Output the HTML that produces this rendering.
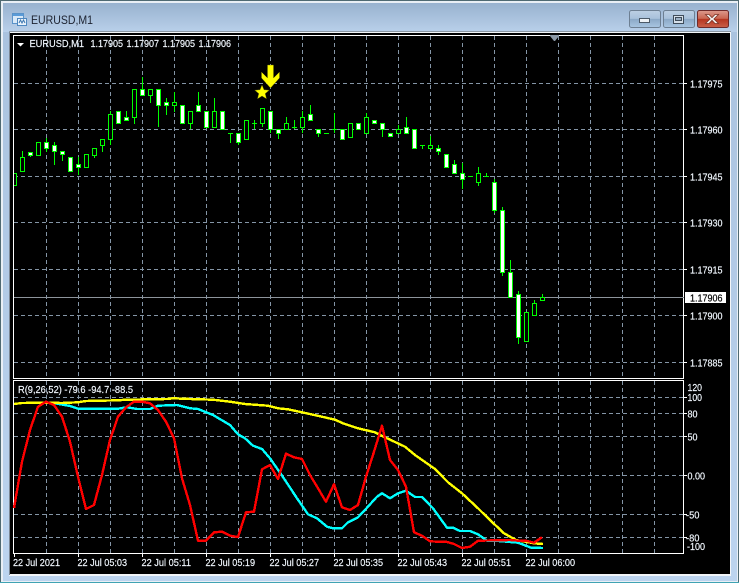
<!DOCTYPE html>
<html><head><meta charset="utf-8"><title>EURUSD,M1</title>
<style>
html,body{margin:0;padding:0;background:#fff;width:741px;height:584px;overflow:hidden}
svg{display:block;position:absolute;left:0;top:0}
text{font-family:"Liberation Sans",sans-serif;font-size:10.5px;fill:#f2f8ff;stroke:#f2f8ff;stroke-width:.18}
</style></head><body>
<svg width="741" height="584" viewBox="0 0 741 584" xmlns="http://www.w3.org/2000/svg">
<defs>
<linearGradient id="t" x1="0" y1="0" x2="0" y2="1"><stop offset="0" stop-color="#98b2cf"/><stop offset="1" stop-color="#b9d0ea"/></linearGradient>
<linearGradient id="side" x1="0" y1="0" x2="0" y2="1"><stop offset="0" stop-color="#a9c2de"/><stop offset="1" stop-color="#bcd4ef"/></linearGradient>
<linearGradient id="b" x1="0" y1="0" x2="0" y2="1"><stop offset="0" stop-color="#bccfe3"/><stop offset=".48" stop-color="#a8c1db"/><stop offset=".5" stop-color="#8ba8c6"/><stop offset="1" stop-color="#a9c6e2"/></linearGradient>
<linearGradient id="c" x1="0" y1="0" x2="0" y2="1"><stop offset="0" stop-color="#dc9a8e"/><stop offset=".48" stop-color="#c9644f"/><stop offset=".5" stop-color="#b5341f"/><stop offset="1" stop-color="#c9604a"/></linearGradient>
<clipPath id="m"><rect x="14" y="36" width="669" height="342"/></clipPath>
</defs>
<!-- window -->
<rect width="741" height="584" fill="#fff"/>
<rect x="0" y="0" width="739" height="583" fill="#4f6a72"/>
<rect x="1" y="1" width="737" height="581" fill="#e9eff5"/>
<rect x="3" y="3" width="734" height="578" fill="url(#side)"/>
<rect x="3" y="3" width="734" height="29" fill="url(#t)"/>
<rect x="0" y="582" width="739" height="1" fill="#3fa3b3"/>
<rect x="9" y="31" width="722" height="1" fill="#8b97a3"/>
<rect x="9" y="32" width="722" height="544" fill="#f2f5f8"/>
<rect x="9" y="32" width="1" height="543" fill="#7b8794"/>
<rect x="10" y="33" width="720" height="541" fill="#000"/>
<!-- title icon -->
<g shape-rendering="crispEdges">
<rect x="12.5" y="13.5" width="11" height="10" fill="#d9e9f8" stroke="#5a93c9"/>
<rect x="13" y="14" width="10" height="2" fill="#5a9bd8"/>
<rect x="17.5" y="18.5" width="9" height="7" fill="#eaf3fb" stroke="#4f88c0"/>
</g>
<path d="M19 23l1.5-3 1.5 3 1.5-3 1.5 3" fill="none" stroke="#3f78b0"/>
<text x="31" y="24" textLength="62" lengthAdjust="spacingAndGlyphs" style="font-size:12px;fill:#1c2230;stroke:none">EURUSD,M1</text>
<!-- buttons -->
<rect x="629.5" y="10.5" width="31" height="17" rx="2" fill="url(#b)" stroke="#6d7f92"/>
<rect x="663.5" y="10.5" width="31" height="17" rx="2" fill="url(#b)" stroke="#6d7f92"/>
<rect x="697.5" y="10.5" width="31" height="17" rx="2" fill="url(#c)" stroke="#6e2a2a"/>
<g shape-rendering="crispEdges">
<rect x="639.5" y="18.5" width="10" height="4" fill="#eef2f6" stroke="#4c5a68"/>
<rect x="673.5" y="15.5" width="10" height="8" fill="#d5dfe9" stroke="#3f4c5a"/>
<rect x="675.5" y="17.5" width="6" height="3" fill="#9db2c7" stroke="#3f4c5a" stroke-width="1"/>
</g>
<path d="M709 14.5l3 3.2 3-3.2h3.5l-4.6 4.5 4.6 4.5H715l-3-3.2-3 3.2h-3.5l4.6-4.5-4.6-4.5z" fill="#f4f4f4" stroke="#7a3326" stroke-width=".8"/>
<!-- frames -->
<g shape-rendering="crispEdges" fill="none">
<rect x="13.5" y="35.5" width="670" height="343" stroke="#fff"/>
<rect x="13.5" y="380.5" width="670" height="173" stroke="#fff"/>
<!-- grid main -->
<g stroke="#8495a6" stroke-dasharray="4 3">
<path d="M46.5 36V378M78.5 36V378M110.5 36V378M142.5 36V378M174.5 36V378M206.5 36V378M238.5 36V378M270.5 36V378M302.5 36V378M334.5 36V378M366.5 36V378M398.5 36V378M430.5 36V378M462.5 36V378M494.5 36V378M526.5 36V378M558.5 36V378M590.5 36V378M622.5 36V378M654.5 36V378"/>
<path d="M14 83.5H683M14 129.5H683M14 176.5H683M14 222.5H683M14 269.5H683M14 315.5H683M14 362.5H683"/>
<path d="M46.5 381V553M78.5 381V553M110.5 381V553M142.5 381V553M174.5 381V553M206.5 381V553M238.5 381V553M270.5 381V553M302.5 381V553M334.5 381V553M366.5 381V553M398.5 381V553M430.5 381V553M462.5 381V553M494.5 381V553M526.5 381V553M558.5 381V553M590.5 381V553M622.5 381V553M654.5 381V553"/>
<path d="M14 397.5H683M14 413.5H683M14 436.5H683M14 475.5H683M14 514.5H683M14 537.5H683"/>
</g>
<path d="M14 297.5H684" stroke="#8d949b"/>
<!-- ticks -->
<path d="M684 83.5h3M684 129.5h3M684 176.5h3M684 222.5h3M684 269.5h3M684 315.5h3M684 362.5h3M684 397.5h3M684 413.5h3M684 436.5h3M684 475.5h3M684 514.5h3M684 537.5h3M14.5 554v3M78.5 554v3M142.5 554v3M206.5 554v3M270.5 554v3M334.5 554v3M398.5 554v3M462.5 554v3M526.5 554v3" stroke="#fff"/>
</g>
<!-- candles -->
<g clip-path="url(#m)" shape-rendering="crispEdges">
<path fill="none" stroke="#00ff00" d="M22.5 151V171M30.5 152V157M46.5 138V152M54.5 142V165M62.5 151V161M78.5 157V175M94.5 148V158M102.5 139V152M110.5 111V145M126.5 111V120M134.5 89V124M142.5 77V95M150.5 89V103M158.5 89V127M166.5 98V115M174.5 92V112M190.5 111V129M198.5 92V111M214.5 98V127M230.5 133V143M238.5 133V145M254.5 120V129M262.5 108V127M270.5 111V133M278.5 129V139M286.5 117V129M294.5 120V129M302.5 111V133M310.5 105V120M318.5 129V137M334.5 113V133M366.5 113V133M382.5 123V137M398.5 125V133M406.5 117V133M422.5 145V149M430.5 136V148M438.5 145V155M454.5 160V173M462.5 163V189M478.5 167V186M486.5 173V176M494.5 179V213M502.5 207V276M510.5 260V272M518.5 291V344M534.5 300V315M542.5 294V300
M228 133.5h5M252 123.5h5M292 127.5h5M324 133.5h5M332 129.5h5M420 145.5h5M468 176.5h5M484 176.5h5"/>
<path fill="#000" stroke="#00ff00" d="M12.5 173.5h4V185.5h-4zM20.5 157.5h4V171.5h-4zM36.5 142.5h4V155.5h-4zM84.5 154.5h4V167.5h-4zM92.5 148.5h4V155.5h-4zM100.5 139.5h4V145.5h-4zM108.5 114.5h4V139.5h-4zM132.5 89.5h4V117.5h-4zM148.5 89.5h4V95.5h-4zM172.5 102.5h4V105.5h-4zM188.5 111.5h4V123.5h-4zM212.5 111.5h4V127.5h-4zM244.5 120.5h4V139.5h-4zM260.5 108.5h4V123.5h-4zM284.5 123.5h4V129.5h-4zM300.5 117.5h4V127.5h-4zM348.5 123.5h4V137.5h-4zM364.5 117.5h4V133.5h-4zM396.5 129.5h4V133.5h-4zM428.5 145.5h4V148.5h-4zM476.5 173.5h4V182.5h-4zM524.5 312.5h4V341.5h-4zM532.5 303.5h4V315.5h-4zM540.5 297.5h4V300.5h-4z"/>
<path fill="#fff" stroke="#00ff00" d="M28.5 152.5h4V155.5h-4zM44.5 142.5h4V148.5h-4zM52.5 145.5h4V151.5h-4zM60.5 151.5h4V154.5h-4zM68.5 157.5h4V171.5h-4zM76.5 164.5h4V167.5h-4zM116.5 111.5h4V123.5h-4zM124.5 117.5h4V120.5h-4zM140.5 89.5h4V95.5h-4zM156.5 89.5h4V105.5h-4zM164.5 102.5h4V105.5h-4zM180.5 105.5h4V123.5h-4zM196.5 105.5h4V111.5h-4zM204.5 111.5h4V127.5h-4zM220.5 111.5h4V129.5h-4zM236.5 133.5h4V142.5h-4zM268.5 111.5h4V129.5h-4zM276.5 129.5h4V133.5h-4zM308.5 114.5h4V120.5h-4zM316.5 129.5h4V133.5h-4zM340.5 129.5h4V139.5h-4zM356.5 123.5h4V129.5h-4zM372.5 120.5h4V123.5h-4zM380.5 123.5h4V129.5h-4zM388.5 133.5h4V136.5h-4zM404.5 127.5h4V133.5h-4zM412.5 129.5h4V148.5h-4zM436.5 148.5h4V151.5h-4zM444.5 154.5h4V167.5h-4zM452.5 164.5h4V173.5h-4zM460.5 173.5h4V179.5h-4zM492.5 182.5h4V210.5h-4zM500.5 210.5h4V272.5h-4zM508.5 272.5h4V297.5h-4zM516.5 294.5h4V337.5h-4z"/>
</g>
<!-- objects -->
<path d="M550 35h9v1l-4 5h-1l-4-5z" fill="#8b98a6"/>
<path d="M267.5 65h6v13l6-6v6l-9 10-9-10v-6l6 6z" fill="#ffff00" stroke="#6b6b00" stroke-width=".4"/>
<path d="M262 85l2 4.800 5.200.4-4 3.400 1.300 5.200-4.500-2.800-4.500 2.800 1.300-5.200-4-3.400 5.200-.4z" fill="#ffff00" stroke="#6b6b00" stroke-width=".4"/>
<path d="M17 43h7l-3.500 3.500z" fill="#fff"/>
<!-- indicator lines -->
<g fill="none" stroke-width="2.400" shape-rendering="crispEdges" stroke-linejoin="round">
<polyline stroke="#00ffff" points="46,402.700 55,403.300 70,406 78,408.700 118,408.700 127,407.300 137,409 150,409 158,405.700 177,405 190,408.300 198,409 213,415 230,425 238,434.300 245,438.300 253,445.700 262,449 270,458.300 285,480 297,498.300 308,514.300 317,518.300 327,526.700 333,528.300 342,528.300 348,522.300 358,517.300 367,507.700 377,496.700 382,493.300 390,498.300 398,493.300 406,490.700 415,497 422,497 433,508.300 447,527.700 453,527.700 460,531 470,531 478,534.300 487,540.700 495,540.700 518,542.700 531,547.700 543,548"/>
<polyline stroke="#ffff00" points="14,404 22,403 46,402.700 62,403 78,402.300 86,401 118,400.300 126,399.700 167,399 173,398.300 190,399 213,399.700 230,401.700 245,404 268,405.700 278,408.300 288,409.300 302,412.300 322,416.700 335,419.700 343,423.300 358,428.300 375,432.300 385,437.300 405,446.700 415,455 435,469 448,482.300 462,493.300 478,508.300 491,521 504,533.300 516,540 534,543.300 543,544"/>
<polyline stroke="#ff0000" points="14,508 22,461.700 30,430 38,406.700 46,401.700 54,405 62,416.700 70,441.700 78,476.700 86,509 94,505 102,475 110,440 118,416.700 126,407.300 134,401.700 142,401.700 150,403.300 158,410 166,421.700 174,438.300 182,478.300 190,505 198,540.700 206,540.700 214,532.300 222,531.700 230,535.700 238,537 246,512.300 254,511.700 262,469.300 270,465 278,479 286,453.700 294,457.300 302,459 310,475 318,488.300 326,501.700 334,484.300 342,507.300 350,510 358,505 366,476.700 374,451.700 382,425.700 390,460 398,470 406,486.700 414,532.300 422,535.700 430,541.300 438,541.700 446,541.700 454,544 462,548 470,546.700 478,540.700 510,540 518,540.700 526,540.700 534,542.700 542,537.300"/>
</g>
<!-- header text -->
<text x="29.500" y="47" textLength="54.500" lengthAdjust="spacingAndGlyphs">EURUSD,M1</text>
<text x="90.500" y="47" textLength="32.500" lengthAdjust="spacingAndGlyphs">1.17905</text>
<text x="126.500" y="47" textLength="32.500" lengthAdjust="spacingAndGlyphs">1.17907</text>
<text x="162.500" y="47" textLength="32.500" lengthAdjust="spacingAndGlyphs">1.17905</text>
<text x="198.500" y="47" textLength="32.500" lengthAdjust="spacingAndGlyphs">1.17906</text>
<text x="18" y="393" textLength="115" lengthAdjust="spacingAndGlyphs">R(9,26,52) -79.6 -94.7 -88.5</text>
<!-- price labels -->
<g>
<text x="690" y="87.500" textLength="32.500" lengthAdjust="spacingAndGlyphs">1.17975</text>
<text x="690" y="133.500" textLength="32.500" lengthAdjust="spacingAndGlyphs">1.17960</text>
<text x="690" y="180.500" textLength="32.500" lengthAdjust="spacingAndGlyphs">1.17945</text>
<text x="690" y="226.500" textLength="32.500" lengthAdjust="spacingAndGlyphs">1.17930</text>
<text x="690" y="273.500" textLength="32.500" lengthAdjust="spacingAndGlyphs">1.17915</text>
<text x="690" y="319.500" textLength="32.500" lengthAdjust="spacingAndGlyphs">1.17900</text>
<text x="690" y="366.500" textLength="32.500" lengthAdjust="spacingAndGlyphs">1.17885</text>
</g>
<rect x="685" y="292" width="41" height="11" fill="#fff"/>
<text x="690" y="301.500" textLength="32.500" lengthAdjust="spacingAndGlyphs" style="fill:#000;stroke:#000">1.17906</text>
<!-- indicator labels -->
<text x="687.500" y="391" textLength="14.500" lengthAdjust="spacingAndGlyphs">120</text>
<text x="687.500" y="401" textLength="14.500" lengthAdjust="spacingAndGlyphs">100</text>
<text x="687.500" y="417.500" textLength="10" lengthAdjust="spacingAndGlyphs">80</text>
<text x="687.500" y="440.500" textLength="10" lengthAdjust="spacingAndGlyphs">50</text>
<text x="687.500" y="479.500" textLength="17.500" lengthAdjust="spacingAndGlyphs">0.00</text>
<text x="686" y="518.500" textLength="13.500" lengthAdjust="spacingAndGlyphs">-50</text>
<text x="686" y="541.500" textLength="13.500" lengthAdjust="spacingAndGlyphs">-80</text>
<text x="687" y="550" textLength="18" lengthAdjust="spacingAndGlyphs">-100</text>
<!-- time labels -->
<text x="13" y="566" textLength="47" lengthAdjust="spacingAndGlyphs">22 Jul 2021</text>
<text x="77.500" y="566" textLength="49.500" lengthAdjust="spacingAndGlyphs">22 Jul 05:03</text>
<text x="141.500" y="566" textLength="49.500" lengthAdjust="spacingAndGlyphs">22 Jul 05:11</text>
<text x="205.500" y="566" textLength="49.500" lengthAdjust="spacingAndGlyphs">22 Jul 05:19</text>
<text x="269.500" y="566" textLength="49.500" lengthAdjust="spacingAndGlyphs">22 Jul 05:27</text>
<text x="333.500" y="566" textLength="49.500" lengthAdjust="spacingAndGlyphs">22 Jul 05:35</text>
<text x="397.500" y="566" textLength="49.500" lengthAdjust="spacingAndGlyphs">22 Jul 05:43</text>
<text x="461.500" y="566" textLength="49.500" lengthAdjust="spacingAndGlyphs">22 Jul 05:51</text>
<text x="525.500" y="566" textLength="49.500" lengthAdjust="spacingAndGlyphs">22 Jul 06:00</text>
</svg>
</body></html>
